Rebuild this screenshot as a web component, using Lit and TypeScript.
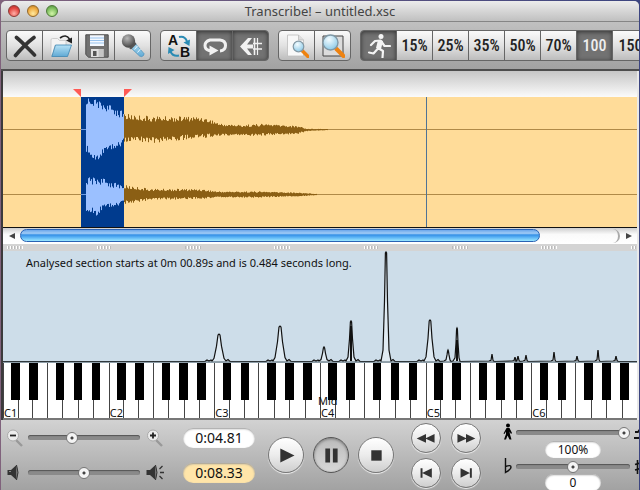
import { LitElement, html, css, svg, nothing } from "lit";
import { customElement, state } from "lit/decorators.js";
import { classMap } from "lit/directives/class-map.js";

type Point = [number, number];

/* ---------- drawing helpers ---------- */

const noise = (n: number): number => {
  const v = Math.sin(n * 12.9898) * 43758.5453;
  return v - Math.floor(v);
};

const envelope = (points: Point[], x: number): number => {
  for (let i = 1; i < points.length; i++) {
    const [x0, y0] = points[i - 1];
    const [x1, y1] = points[i];
    if (x <= x1) return y0 + ((y1 - y0) * (x - x0)) / (x1 - x0);
  }
  return points[points.length - 1][1];
};

const wave = (from: number, to: number, top: Point[], bottom: Point[], seed: number): string => {
  let d = "";
  for (let x = from; x < to; x++) {
    const t = envelope(top, x);
    const b = envelope(bottom, x);
    const j = Math.min(8, (b - t) * 0.28);
    const y0 = t + j * (noise(x + seed) - 0.5);
    const y1 = b - j * (noise(x * 3 + seed) - 0.5);
    d += `M${x + 0.5} ${y0.toFixed(1)}V${y1.toFixed(1)}`;
  }
  return d;
};

const LEFT_TOP: Point[] = [[86, 101], [92, 102], [104, 107], [112, 110], [124, 116], [126, 117], [150, 119], [200, 119], [212, 122], [220, 125], [240, 126], [265, 125], [300, 127], [306, 129], [328, 129]];
const LEFT_BOTTOM: Point[] = [[86, 148], [94, 158], [105, 151], [124, 141], [130, 139], [155, 140], [200, 136], [220, 135], [245, 135], [298, 133], [306, 131], [328, 130]];
const RIGHT_TOP: Point[] = [[86, 181], [100, 181], [112, 185], [124, 187], [150, 190], [200, 190], [217, 192], [260, 192], [300, 193], [317, 194]];
const RIGHT_BOTTOM: Point[] = [[86, 209], [97, 212], [105, 207], [124, 202], [150, 199], [200, 198], [217, 197], [260, 197], [300, 196], [317, 195]];

/* x centre, top, half width of each spectral peak */
const PEAKS: [number, number, number][] = [
  [219, 334, 5], [280, 326, 5], [324, 347, 3], [351, 321, 3], [386, 252, 3], [430, 320, 4],
  [448, 350, 2], [457, 328, 2], [492, 354, 1], [515, 357, 1], [518, 356, 1], [526, 355, 1],
  [554, 352, 1], [577, 356, 1], [598, 350, 1], [616, 356, 1],
];

const spectrum = (): string => {
  let d = "M3 361.5";
  for (const [x, y, w] of PEAKS) {
    const h = 361 - y;
    if (w > 2) d += `H${x - w - 9}l2 -1.5l2 1l2 -1`;
    d += `L${x - w - 2} 361L${x - w} ${361 - h * 0.1}L${x - w / 2} ${361 - h * 0.55}L${x - w / 5} ${y + 1}L${x} ${y}L${x + w / 5} ${y + 1}L${x + w / 2} ${361 - h * 0.55}L${x + w} ${361 - h * 0.1}`;
    d += w > 2 ? `L${x + w + 2} 361l2 -1.5l2 2` : `L${x + w + 1} 361.5`;
  }
  return d + "H637";
};

/* ---------- icons ---------- */

const icons: Record<string, unknown> = {
  close: svg`<path d="M3.5 3.5C9 8 15 14.5 21.5 21M21 3.5C15 8 8 15 2.5 21.5" fill="none" stroke="#333" stroke-width="3.6" stroke-linecap="round"/>`,
  open: svg`<path d="M2 6q0-1.5 1.5-1.5h5l2 2h6.5v5H6L3.500 21H2z" fill="#f3f3f3" stroke="#c4c4c4" stroke-width=".8"/>
    <path d="M6.5 11h16l-4 11.5H2.800z" fill="url(#folder)" stroke="#3e87b2" stroke-width=".8"/>
    <path d="M11 4q6-4.5 9.5 1" fill="none" stroke="#222" stroke-width="1.6"/><path d="M17 6.5l6-3v6z" fill="#222"/>`,
  save: svg`<path d="M.8.8h22.4v22.4H3.5L.8 20.5z" fill="#717171" stroke="#4d4d4d"/>
    <path d="M5 1.3h14V12H5z" fill="#f3f8ff"/><path d="M5 4h14M5 6.5h14M5 9h14" stroke="#98c3ee" stroke-width="1"/>
    <path d="M6 15h12.500v8H6z" fill="#e0e0e0"/><path d="M8 17h3.500v5H8z" fill="#555"/><path d="M13.500 15h5v8h-5z" fill="#c5c5c5"/>`,
  mic: svg`<path d="M13.5 8.5L9 13l9.5 9q2.5 1.5 4-.5t-.5-3z" fill="url(#folder)" stroke="#4d8fb8" stroke-width=".7"/>
    <path d="M13.5 15.5l3-3.5M16.5 18.5l3-3.5" stroke="#eaf7ff" stroke-width="1"/>
    <circle cx="7.5" cy="7" r="6.7" fill="url(#ball)"/><path d="M14 8l-6 6 2 1.5 5.5-5.5z" fill="#555"/>`,
  ab: svg`<text x="1" y="11" class="letter">A</text><text x="13" y="23" class="letter">B</text>
    <path d="M12 3q6-1.500 8 4.500" fill="none" stroke="#2a8bb4" stroke-width="2"/><path d="M16.500 8.500l6.500-3-.5 6.500z" fill="#2a8bb4"/>
    <path d="M12 21.500q-6 1.500-8.500-4" fill="none" stroke="#2a8bb4" stroke-width="2"/><path d="M1 20l.5-7 6 3z" fill="#2a8bb4"/>`,
  loop: svg`<path d="M7 16.5H6Q2 15.5 2 11.5T7 6h10q5.5.5 5.5 5.5T17 17" fill="none" stroke="#f1f1f1" stroke-width="3"/><path d="M6.5 11.5v10l9-5z" fill="#f1f1f1"/>`,
  split: svg`<path d="M1 12.500L9 4h4L8 10.500h6v4H8L13 21H9z" fill="#f1f1f1"/><path d="M15.500 4v17" stroke="#f1f1f1" stroke-width="1.600"/><path d="M18.500 4v17" stroke="#f1f1f1" stroke-width="1.200"/><path d="M14 9.500h9M14 15h9" stroke="#f1f1f1" stroke-width="1.600"/>`,
  page: svg`<path d="M2.5 1h11l5 5v16h-16z" fill="#f8f8f8" stroke="#bdbdbd" stroke-width=".8"/><path d="M13.5 1v5h5" fill="#ddd" stroke="#bbb" stroke-width=".8"/>
    <path d="M17.5 17l5.5 5.5" stroke="#ee8210" stroke-width="3.5" stroke-linecap="round"/><circle cx="13.5" cy="12.5" r="5.3" fill="url(#lens)" stroke="#8499a5" stroke-width="1.2"/>`,
  frame: svg`<path d="M2 2h20v20H2z" fill="#dcdcdc" stroke="#444"/>
    <path d="M15.5 15l7 7" stroke="#ee8210" stroke-width="4.2" stroke-linecap="round"/><circle cx="9.5" cy="8.5" r="7.5" fill="url(#lens)" stroke="#7f98a6" stroke-width="1.4"/>`,
  run: svg`<circle cx="14" cy="2.6" r="2.5" fill="#f4f4f4"/><path d="M13.5 6.5L8 7l-4 4M12.5 7l-1.5 7.5-4.5 5L2 18.5M11 14l5 3-.5 6.5M14 7l3.5 5H23" fill="none" stroke="#f4f4f4" stroke-width="2.2" stroke-linejoin="round" stroke-linecap="round"/><path d="M11 6l5 1-2 8-5-1z" fill="#f4f4f4"/>`,
};

const small: Record<string, unknown> = {
  zoomOut: svg`<path d="M10 11l6 6" stroke="#999" stroke-width="2.4"/><circle cx="7" cy="6.5" r="5.5" fill="#ececec" stroke="#aaa"/><path d="M4 6.5h6" stroke="#222" stroke-width="1.8"/>`,
  zoomIn: svg`<path d="M10 11l6 6" stroke="#999" stroke-width="2.4"/><circle cx="7" cy="6.5" r="5.5" fill="#ececec" stroke="#aaa"/><path d="M4 6.5h6M7 3.5v6" stroke="#222" stroke-width="1.8"/>`,
  quiet: svg`<path d="M1.5 6H5l5.5-5v15L5 11H1.5z" fill="#333"/><path d="M10.5 1q3 7.5 0 15" fill="#777" stroke="#333"/><path d="M3 7.5h2" stroke="#888"/>`,
  loud: svg`<path d="M.5 6H4l5.5-5v15L4 11H.5z" fill="#333"/><path d="M9.5 1q3 7.5 0 15" fill="#777" stroke="#333"/><path d="M13.5 5l3-3M14 8.5h4M13.5 12l3 3" stroke="#333" stroke-width="1.3"/>`,
  walk: svg`<circle cx="8" cy="2.6" r="2"/><path d="M6.500 5h3l2.500 5-1 1-1.500-2.500.5 3 1.500 5H9.500l-2-4L6 16.500H4l2-5.500V8.500L4.500 11 3.500 10.500z"/>`,
  runSmall: svg`<path d="M1 9h3l2-3h3M9 6l-1 5-3 4H0M8 11l4 2v4" fill="none" stroke="#111" stroke-width="1.8"/>`,
  flat: svg`<path d="M5.5 1v14.5Q11 12.5 11 10t-5.5-.5" fill="none" stroke="#111" stroke-width="1.4"/>`,
  sharp: svg`<path d="M3.5 3v14M7.5 1v14M1 7.5l9-2.5M1 13l9-2.5" fill="none" stroke="#111" stroke-width="1.6"/>`,
};

const transport: Record<string, unknown> = {
  play: svg`<path d="M12 11l15 7.5L12 26z"/>`,
  pause: svg`<path d="M12 11h5v15h-5zM20 11h5v15h-5z"/>`,
  stop: svg`<path d="M13 13h11v11H13z"/>`,
  rewind: svg`<path d="M18 13v11L6 18.500zM29 13v11L17 18.500z"/>`,
  forward: svg`<path d="M7 13v11l12-5.500zM18 13v11l12-5.500z"/>`,
  start: svg`<path d="M11 12h2.5v12H11zM25.5 12v12L13 18z"/>`,
  end: svg`<path d="M23 12h2.5v12H23zM11 12v12l12-6z"/>`,
};

const SPEEDS = ["15%", "25%", "35%", "50%", "70%", "100", "150"];

@customElement("app-root")
export class AppRoot extends LitElement {
  static styles = css`
    :host {
      display: flex;
      flex-direction: column;
      box-sizing: border-box;
      min-height: 100vh;
      padding: 1px 1px 0;
      overflow: hidden;
      background: linear-gradient(90deg, #80627c, #3c4580);
      font-family: "Noto Sans", "Open Sans", sans-serif;
      font-size: 11px;
      color: #111;
    }
    button, input { font: inherit; color: inherit; margin: 0; box-sizing: border-box; }
    button { padding: 0; }
    svg { display: block; }
    .defs { position: absolute; width: 0; height: 0; }
    .letter { font: 700 14px "Liberation Sans", sans-serif; fill: #111; }
    .window {
      flex: 1;
      display: flex;
      flex-direction: column;
      min-width: 0;
      overflow: hidden;
      border-radius: 5px 5px 0 0;
      background: #a8a8a8;
    }
    .titlebar {
      display: grid;
      grid-template-columns: 60px 1fr 60px;
      align-items: center;
      height: 21px;
      box-sizing: border-box;
      border-bottom: 1px solid #858585;
      background: linear-gradient(#ececec, #c0c0c0);
    }
    .lights { display: flex; gap: 7px; padding-left: 7px; }
    .light {
      width: 12px; height: 12px; border-radius: 50%;
      border: 1px solid #8b3a36;
      background: radial-gradient(circle at 50% 75%, #ffb0a8, #e2453f 60%, #a8302c);
    }
    .light.amber { border-color: #93672a; background: radial-gradient(circle at 50% 75%, #ffeaa0, #eeaa40 60%, #b37722); }
    .light.green { border-color: #4d7838; background: radial-gradient(circle at 50% 75%, #d2f5a8, #7dbd5e 60%, #4c8a38); }
    .title { margin: 0; text-align: center; font-size: 13px; line-height: 20px; font-weight: 400; color: #444; }
    .toolbar {
      display: flex;
      gap: 9px;
      padding: 8px 5px;
      border-bottom: 2px solid #4d4d4d;
      background: linear-gradient(#c0c0c0, #a2a2a2);
    }
    .group { display: flex; flex: none; }
    .tool {
      display: grid;
      place-items: center;
      width: 37px;
      height: 31px;
      border: 1px solid #666;
      background: linear-gradient(#fafafa, #e2e2e2 50%, #bdbdbd);
      font-family: "Liberation Sans Narrow", "Roboto Condensed", "Liberation Sans", sans-serif;
      font-size: 16px;
      font-weight: 500;
      color: #222;
    }
    .tool + .tool { margin-left: -1px; }
    .tool:first-child { border-radius: 4px 0 0 4px; }
    .tool:last-child { border-radius: 0 4px 4px 0; }
    .tool.on { background: #727272; color: #eee; box-shadow: inset 0 1px 4px #333; }
    .content { border-left: 2px solid #3c3a3c; border-right: 2px solid #e9e9e9; }
    .wave { width: 100%; height: 156px; background: linear-gradient(#c6c6c6, #fbfbfb 26px, #ffdc99 26px); }
    .scroll {
      display: flex;
      align-items: center;
      height: 17px;
      box-sizing: border-box;
      border-top: 1px solid #111;
      background: linear-gradient(#cfcfcf, #fafafa 40%, #fff);
    }
    .arrow { width: 17px; height: 16px; border: 0; background: none; display: grid; place-items: center; }
    .groove { flex: 1; height: 14px; border-right: 2px solid #aaa; border-radius: 7px; }
    .thumb {
      width: 87%;
      height: 13px;
      box-sizing: border-box;
      border: 1px solid #2a63b4;
      border-radius: 7px;
      background: linear-gradient(#6ba6ea, #a0cbf6 30%, #3590e6 45%, #58b0f4 65%, #9ce8ff);
    }
    .sash {
      height: 7px;
      background:
        repeating-linear-gradient(90deg, #d4d4d4 0 4px, transparent 4px 20px, #d4d4d4 20px 89px),
        repeating-linear-gradient(90deg, #d4d4d4 0 1px, #fff 1px 2px, #bbb 2px 3px) 0 2px / 100% 3px no-repeat,
        #d4d4d4;
    }
    .analysis { position: relative; background: #cddde9; }
    .plot { width: 100%; height: 112px; }
    .note { position: absolute; left: 23px; top: 4px; margin: 0; line-height: 16px; white-space: nowrap; }
    .keyboard { display: flex; height: 57px; box-sizing: border-box; border-bottom: 2px solid #777; background: #fff; }
    .octave { flex: 1; position: relative; display: grid; grid-template-columns: repeat(3, 20fr) repeat(4, 21fr); }
    .white { border: 0; border-left: 1px solid #444; background: #fff; }
    .black { position: absolute; top: 0; width: 8%; height: 37px; border: 0; background: #000; }
    .black.k1 { left: 8%; }
    .black.k3 { left: 25%; }
    .black.k6 { left: 50%; }
    .black.k8 { left: 67%; }
    .black.k10 { left: 84%; }
    .label { position: absolute; left: 1px; bottom: -1px; line-height: 13px; pointer-events: none; }
    .label.mid { left: -2px; bottom: 11px; }
    .panel {
      flex: 1;
      display: flex;
      min-height: 70px;
      padding-left: 5px;
      background: linear-gradient(#d2d2d2, #a2a2a2);
    }
    .panel > * { flex: none; height: 70px; }
    .levels { display: grid; grid-template: 35px 35px / 22px 112px 24px; align-items: center; }
    .levels .after { margin-left: 6px; }
    .times { display: grid; grid-template: 35px 35px / 72px; align-items: center; margin-left: 19px; }
    .field {
      width: 100%;
      height: 20px;
      padding: 0;
      border: 0;
      border-radius: 10px;
      text-align: center;
      background: #fff;
      box-shadow: inset 0 1px 2px #999;
    }
    .field.time { font-size: 14px; }
    .field.total { background: #ffe5a9; }
    .field.short { width: 56px; height: 17px; font-size: 12px; justify-self: center; }
    .transport { display: flex; gap: 9px; align-items: center; margin-left: 13px; }
    .round {
      display: grid;
      place-items: center;
      width: 36px;
      height: 36px;
      border: 1px solid #777;
      border-radius: 50%;
      background: linear-gradient(#fff, #ececec 50%, #cecece);
      box-shadow: 0 1px 1px #eee;
      fill: #333;
    }
    .round.on { background: linear-gradient(#bbb, #d8d8d8); border-color: #555; box-shadow: inset 0 1px 3px #777; }
    .round.skip { width: 30px; height: 30px; }
    .skips { display: grid; grid-template: 35px 35px / 30px 30px; column-gap: 10px; align-items: center; margin-left: 17px; }
    .tuning {
      display: grid;
      grid-template: 18px 16px 17px 16px / 16px 114px 20px;
      align-content: end;
      align-items: center;
      margin-left: 19px;
    }
    .tuning .before { grid-column: 1; align-self: start; }
    .tuning .field { grid-column: 2; }
    .tuning .slider { align-self: start; margin-top: 3px; }
    .tuning .after { margin-left: 4px; align-self: start; }
    .slider { appearance: none; width: 100%; height: 12px; background: none; }
    .slider::-webkit-slider-runnable-track { height: 5px; border-radius: 3px; background: #8a8a8a; box-shadow: inset 0 1px 1px #555; }
    .slider::-webkit-slider-thumb {
      appearance: none;
      width: 12px; height: 12px; margin-top: -3px;
      border: 1px solid #777; border-radius: 50%;
      background: radial-gradient(circle, #444 0 1px, #f4f4f4 2px);
    }
  `;

  @state() private speed = "100";
  @state() private playing = "pause";

  private tool(name: string, label: string, on = false) {
    return html`<button class=${classMap({ tool: true, on })} aria-label=${label}>
      <svg width="24" height="24" viewBox="0 0 24 24">${icons[name]}</svg>
    </button>`;
  }

  private round(name: string, label: string, skip = false) {
    return html`<button
      class=${classMap({ round: true, skip, on: this.playing === name })}
      aria-label=${label}
      @click=${() => { if (!skip) this.playing = name; }}
    ><svg width=${skip ? 28 : 34} height=${skip ? 28 : 34} viewBox="0 0 36 36">${transport[name]}</svg></button>`;
  }

  private small(name: string, after = false) {
    return html`<svg class=${after ? "after" : "before"} width="18" height="18" viewBox="0 0 18 18" aria-hidden="true">${small[name]}</svg>`;
  }

  private octave(n: number) {
    return html`<div class="octave">
      ${["C", "D", "E", "F", "G", "A", "B"].map((k) => html`<button class="white" aria-label=${k + n}></button>`)}
      <span class="label">C${n}</span>
      ${n === 4 ? html`<span class="label mid">Mid</span>` : nothing}
      ${[1, 3, 6, 8, 10].map((k) => html`<button class="black k${k}" aria-label="Semitone ${k}, octave ${n}"></button>`)}
    </div>`;
  }

  render() {
    return html`
      <main class="window">
        <header class="titlebar">
          <div class="lights"><button class="light" aria-label="Close"></button><button class="light amber" aria-label="Minimise"></button><button class="light green" aria-label="Zoom"></button></div>
          <h1 class="title">Transcribe! – untitled.xsc</h1>
        </header>
        <nav class="toolbar">
          <div class="group">
            ${this.tool("close", "Close file")}${this.tool("open", "Open")}${this.tool("save", "Save")}${this.tool("mic", "Record")}
          </div>
          <div class="group">${this.tool("ab", "A to B")}${this.tool("loop", "Loop", true)}${this.tool("split", "Scroll", true)}</div>
          <div class="group">${this.tool("page", "View all")}${this.tool("frame", "View selection")}</div>
          <div class="group">
            ${this.tool("run", "Speed", true)}
            ${SPEEDS.map((s) => html`<button class=${classMap({ tool: true, on: s === this.speed })} @click=${() => { this.speed = s; }}>${s}</button>`)}
          </div>
        </nav>
        <div class="content">
          <svg class="wave" viewBox="3 71 634 156" preserveAspectRatio="none" role="img" aria-label="Waveform">
            <path d="M73 89h8v8zM124 89h8l-8 8z" fill="#ff5a55"/>
            <path d="M81 97h43v130H81z" fill="#003b8e"/>
            <path d="M3 129.5H81M124 129.5H637M3 194.5H81M124 194.5H637" stroke="#b08a48"/>
            <path d="M81 129.5h6M81 194.5h6" stroke="#6f9be0"/>
            <path d=${wave(86, 124, LEFT_TOP, LEFT_BOTTOM, 3) + wave(86, 124, RIGHT_TOP, RIGHT_BOTTOM, 9)} stroke="#9bc0ff"/>
            <path d=${wave(124, 328, LEFT_TOP, LEFT_BOTTOM, 5) + wave(124, 317, RIGHT_TOP, RIGHT_BOTTOM, 7)} stroke="#8b5f14"/>
            <path d="M426.5 97v130" stroke="#4f7396"/>
          </svg>
          <div class="scroll">
            <button class="arrow" aria-label="Scroll left"><svg width="6" height="6" viewBox="0 0 6 6"><path d="M6 0v6L0 3z" fill="#444"/></svg></button>
            <div class="groove"><div class="thumb"></div></div>
            <button class="arrow" aria-label="Scroll right"><svg width="6" height="6" viewBox="0 0 6 6"><path d="M0 0v6l6-3z" fill="#444"/></svg></button>
          </div>
          <div class="sash"></div>
          <section class="analysis">
            <p class="note">Analysed section starts at 0m 00.89s and is 0.484 seconds long.</p>
            <svg class="plot" viewBox="3 251 634 112" preserveAspectRatio="none" role="img" aria-label="Spectrum">
              <path d=${spectrum()} fill="#dfeaf2" stroke="#111" stroke-width="1.2"/>
              <path d="M350 361V326h2V361zM456 361V340h2V361z" fill="#111"/>
              <path d="M3 362h634" stroke="#506068"/>
            </svg>
          </section>
          <section class="keyboard">${[1, 2, 3, 4, 5, 6].map((n) => this.octave(n))}</section>
        </div>
        <footer class="panel">
          <div class="levels">
            ${this.small("zoomOut")}<input class="slider" type="range" aria-label="Zoom" value="38" />${this.small("zoomIn", true)}
            ${this.small("quiet")}<input class="slider" type="range" aria-label="Volume" value="50" />${this.small("loud", true)}
          </div>
          <div class="times">
            <input class="field time" aria-label="Position" value="0:04.81" />
            <input class="field time total" aria-label="Duration" value="0:08.33" />
          </div>
          <div class="transport">${this.round("play", "Play")}${this.round("pause", "Pause")}${this.round("stop", "Stop")}</div>
          <div class="skips">
            ${this.round("rewind", "Rewind", true)}${this.round("forward", "Fast forward", true)}
            ${this.round("start", "To start", true)}${this.round("end", "To end", true)}
          </div>
          <div class="tuning">
            ${this.small("walk")}<input class="slider" type="range" aria-label="Tempo" value="100" />${this.small("runSmall", true)}
            <input class="field short" aria-label="Tempo percent" value="100%" />
            ${this.small("flat")}<input class="slider" type="range" aria-label="Pitch" value="50" />${this.small("sharp", true)}
            <input class="field short" aria-label="Semitones" value="0" />
          </div>
        </footer>
      </main>
      <svg class="defs" aria-hidden="true">
        <defs>
          <linearGradient id="folder" x1="0" y1="0" x2="0" y2="1"><stop offset="0" stop-color="#b7e2f6" /><stop offset="1" stop-color="#5fa9d4" /></linearGradient>
          <radialGradient id="ball" cx=".4" cy=".3" r=".7"><stop offset="0" stop-color="#b8b8b8" /><stop offset="1" stop-color="#444" /></radialGradient>
          <radialGradient id="lens" cx=".4" cy=".3" r=".7"><stop offset="0" stop-color="#f4fcff" /><stop offset="1" stop-color="#8fcbe8" /></radialGradient>
        </defs>
      </svg>
    `;
  }
}
